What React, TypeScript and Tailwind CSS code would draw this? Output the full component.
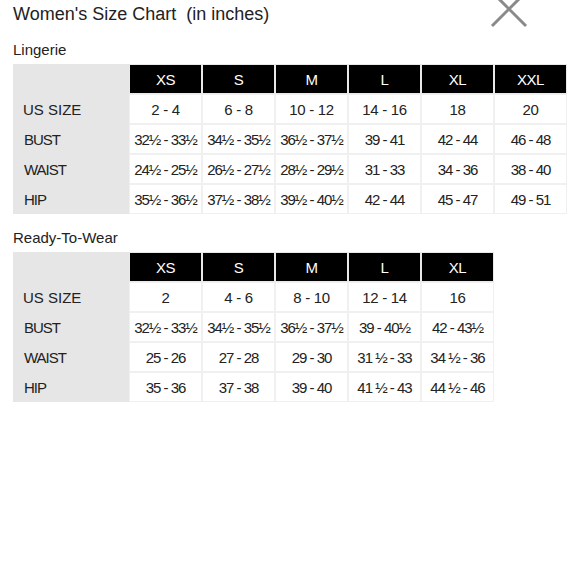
import React from "react";

interface Chart {
  title: string;
  sizes: string[];
  rows: { label: string; values: string[]; tight?: boolean }[];
}

const lingerie: Chart = {
  title: "Lingerie",
  sizes: ["XS", "S", "M", "L", "XL", "XXL"],
  rows: [
    { label: "US SIZE", values: ["2 - 4", "6 - 8", "10 - 12", "14 - 16", "18", "20"] },
    { label: "BUST", tight: true, values: ["32½ - 33½", "34½ - 35½", "36½ - 37½", "39 - 41", "42 - 44", "46 - 48"] },
    { label: "WAIST", tight: true, values: ["24½ - 25½", "26½ - 27½", "28½ - 29½", "31 - 33", "34 - 36", "38 - 40"] },
    { label: "HIP", tight: true, values: ["35½ - 36½", "37½ - 38½", "39½ - 40½", "42 - 44", "45 - 47", "49 - 51"] },
  ],
};

const readyToWear: Chart = {
  title: "Ready-To-Wear",
  sizes: ["XS", "S", "M", "L", "XL"],
  rows: [
    { label: "US SIZE", values: ["2", "4 - 6", "8 - 10", "12 - 14", "16"] },
    { label: "BUST", tight: true, values: ["32½ - 33½", "34½ - 35½", "36½ - 37½", "39 - 40½", "42 - 43½"] },
    { label: "WAIST", tight: true, values: ["25 - 26", "27 - 28", "29 - 30", "31 ½ - 33", "34 ½ - 36"] },
    { label: "HIP", tight: true, values: ["35 - 36", "37 - 38", "39 - 40", "41 ½ - 43", "44 ½ - 46"] },
  ],
};

const SizeTable = ({ chart }: { chart: Chart }) => {
  return (
    <div>
      <p className="text-[15px] leading-[18px] text-[#222]">{chart.title}</p>
      <table className="mt-[5px] table-fixed border-separate border-spacing-0 text-[15px] text-[#222]">
        <thead>
          <tr>
            <th className="w-[116px] h-[30px] p-0 bg-[#e6e6e6] border border-[#e6e6e6]"></th>
            {chart.sizes.map((size) => (
              <th
                key={size}
                className="w-[73px] h-[30px] p-0 pt-[2px] bg-black border border-[#e9e9e9] font-normal text-white tracking-[-0.5px]"
              >
                {size}
              </th>
            ))}
          </tr>
        </thead>
        <tbody>
          {chart.rows.map((row) => (
            <tr key={row.label}>
              <td
                className={
                  row.tight
                    ? "h-[30px] p-0 pt-[2px] pl-[10px] bg-[#e6e6e6] border border-[#e6e6e6] tracking-[-1px]"
                    : "h-[30px] p-0 pt-[2px] pl-[9px] bg-[#e6e6e6] border border-[#e6e6e6]"
                }
              >
                {row.label}
              </td>
              {row.values.map((value, i) => (
                <td
                  key={i}
                  className={
                    row.tight
                      ? "h-[30px] p-0 pt-[2px] text-center whitespace-nowrap border border-[#f0f0f0] tracking-[-1px]"
                      : "h-[30px] p-0 pt-[2px] text-center whitespace-nowrap border border-[#f0f0f0] tracking-[-0.3px]"
                  }
                >
                  {value}
                </td>
              ))}
            </tr>
          ))}
        </tbody>
      </table>
    </div>
  );
};

const App = () => {
  return (
    <div
      className="relative w-[580px] h-[580px] overflow-hidden bg-white pl-[13px] pt-[4px]"
      style={{ fontFamily: '"Liberation Sans", Arial, sans-serif' }}
    >
      <h1 className="text-[18px] leading-[20px] text-[#222] whitespace-pre">
        Women's Size Chart  (in inches)
      </h1>

      <button className="absolute left-[489px] top-[-11px] w-[40px] h-[40px]">
        <svg width="40" height="40" viewBox="0 0 40 40">
          <path d="M3 3 L37 37 M37 3 L3 37" stroke="#8a8a8a" strokeWidth="3" fill="none" />
        </svg>
      </button>

      <div className="mt-[17px]">
        <SizeTable chart={lingerie} />
      </div>
      <div className="mt-[15px]">
        <SizeTable chart={readyToWear} />
      </div>
    </div>
  );
};

export default App;
